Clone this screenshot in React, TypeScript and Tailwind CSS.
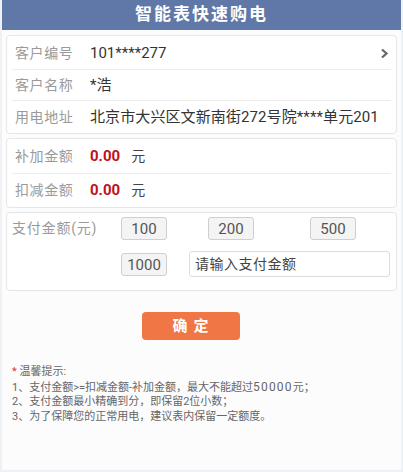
import { useState } from 'react'

const amounts = ['100', '200', '500']

export default function App() {
  const [pay, setPay] = useState('')

  return (
    <div className="w-[403px] h-[472px] bg-[#eef1f5] p-[2px] pt-0 font-['Roboto','Noto_Sans_CJK_SC',sans-serif] overflow-hidden">
      <div className="h-full bg-[#fcfcfd]">
        {/* Header */}
        <div className="h-[30px] bg-[#5f78a7] flex items-center justify-center">
          <h1 className="text-white text-[17px] font-bold tracking-[2px]">智能表快速购电</h1>
        </div>

        {/* Customer info */}
        <div className="mt-[5px] mx-[4px] bg-white border border-[#e6e6e6] rounded-[4px] h-[99px] flex flex-col">
          <div className="h-[34px] pt-[2px] mx-[5px] border-b border-[#ececec] flex items-center">
            <span className="w-[78px] pl-[3px] text-[14px] tracking-[0.6px] text-[#9a9a9a]">客户编号</span>
            <span className="flex-1 text-[15px] text-[#333]">101****277</span>
            <svg className="w-[10px] h-[11px] mr-[2px]" viewBox="0 0 10 11" fill="none" stroke="#666" strokeWidth="2.2">
              <path d="M3 1.5 L7.5 5.5 L3 9.5" />
            </svg>
          </div>
          <div className="h-[31px] mx-[5px] border-b border-[#ececec] flex items-center">
            <span className="w-[78px] pl-[3px] text-[14px] tracking-[0.6px] text-[#9a9a9a]">客户名称</span>
            <span className="text-[15px] text-[#333]">*浩</span>
          </div>
          <div className="flex-1 mx-[5px] flex items-center">
            <span className="w-[78px] pl-[3px] text-[14px] tracking-[0.6px] text-[#9a9a9a]">用电地址</span>
            <span className="text-[15px] tracking-[0.1px] text-[#333] whitespace-nowrap">北京市大兴区文新南街272号院****单元201</span>
          </div>
        </div>

        {/* Adjustments */}
        <div className="mt-[4px] mx-[4px] bg-white border border-[#e6e6e6] rounded-[4px] h-[70px] flex flex-col">
          <div className="h-[35px] mx-[5px] border-b border-[#ececec] flex items-center">
            <span className="w-[78px] pl-[3px] text-[14px] tracking-[0.6px] text-[#9a9a9a]">补加金额</span>
            <span className="text-[15px] font-bold text-[#c0121b] mr-[11px]">0.00</span>
            <span className="text-[14px] text-[#444]">元</span>
          </div>
          <div className="flex-1 mx-[5px] flex items-center">
            <span className="w-[78px] pl-[3px] text-[14px] tracking-[0.6px] text-[#9a9a9a]">扣减金额</span>
            <span className="text-[15px] font-bold text-[#c0121b] mr-[11px]">0.00</span>
            <span className="text-[14px] text-[#444]">元</span>
          </div>
        </div>

        {/* Pay amount */}
        <div className="mt-[4px] mx-[4px] bg-white border border-[#e6e6e6] rounded-[4px] h-[79px] flex pt-[4px]">
          <span className="w-[114px] pl-[5px] h-[23px] flex items-center text-[14px] tracking-[0.8px] text-[#9a9a9a]">支付金额(元)</span>
          <div className="flex flex-col gap-[11px]">
            <div className="flex">
              {amounts.map((a, i) => (
                <button
                  key={a}
                  className={`w-[46px] h-[23px] bg-[#f4f4f4] border border-[#cfcfcf] rounded-[3px] text-[15px] text-[#555] ${i === 0 ? 'mr-[41px]' : i === 1 ? 'mr-[56px]' : ''}`}
                >
                  {a}
                </button>
              ))}
            </div>
            <div className="flex items-center">
              <button className="w-[46px] h-[23px] bg-[#f4f4f4] border border-[#cfcfcf] rounded-[3px] text-[15px] text-[#555] mr-[22px]">
                1000
              </button>
              <input
                value={pay}
                onChange={(e) => setPay(e.target.value)}
                placeholder="请输入支付金额"
                className="w-[201px] h-[26px] px-[5px] bg-white border border-[#dcdcdc] rounded-[3px] text-[14px] tracking-[0.5px] text-[#333] placeholder:text-[#444] outline-none"
              />
            </div>
          </div>
        </div>

        {/* Confirm */}
        <div className="mt-[21px] flex justify-center">
          <button className="w-[98px] h-[28px] bg-[#f07646] rounded-[4px] text-white text-[15px] font-bold tracking-[6px] pl-[6px] ml-[-22px]">
            确定
          </button>
        </div>

        {/* Tips */}
        <div className="mt-[25px] pl-[10px] text-[11px] leading-[14.5px] text-[#666]">
          <p><span className="text-[#d9363e]">*</span> 温馨提示:</p>
          <p>
            1、支付金额&gt;=扣减金额-补加金额，最大不能超过<span className="text-[12px] tracking-[1.2px]">50000</span>元；
          </p>
          <p>2、支付金额最小精确到分，即保留2位小数；</p>
          <p>3、为了保障您的正常用电，建议表内保留一定额度。</p>
        </div>
      </div>
    </div>
  )
}
